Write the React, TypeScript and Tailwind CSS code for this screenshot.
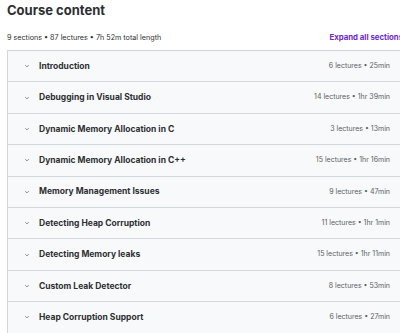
import React from 'react';

const sections = [
  { title: 'Introduction', meta: '6 lectures • 25min' },
  { title: 'Debugging in Visual Studio', meta: '14 lectures • 1hr 39min' },
  { title: 'Dynamic Memory Allocation in C', meta: '3 lectures • 13min' },
  { title: 'Dynamic Memory Allocation in C++', meta: '15 lectures • 1hr 16min' },
  { title: 'Memory Management Issues', meta: '9 lectures • 47min' },
  { title: 'Detecting Heap Corruption', meta: '11 lectures • 1hr 1min' },
  { title: 'Detecting Memory leaks', meta: '15 lectures • 1hr 11min' },
  { title: 'Custom Leak Detector', meta: '8 lectures • 53min' },
  { title: 'Heap Corruption Support', meta: '6 lectures • 27min' },
];

const Chevron = () => (
  <svg width="6" height="6" viewBox="0 0 10 10" className="text-[#6a6f73]">
    <path d="M2 3.5 L5 6.5 L8 3.5" fill="none" stroke="currentColor" strokeWidth="1.3" />
  </svg>
);

export default function App() {
  return (
    <div className="w-[400px] h-[333px] overflow-hidden bg-white font-['Inter',sans-serif] text-[#2d2f31]">
      <div className="w-[396px] ml-[7px]">
        <h2 className="text-[13px] font-bold leading-[13px] pt-[4px]">Course content</h2>
        <div className="flex items-center justify-between mt-[16px] h-[10px]">
          <span className="text-[7.2px] text-[#2d2f31]">9 sections • 87 lectures • 7h 52m total length</span>
          <span className="text-[7.8px] font-bold text-[#6d28d2] whitespace-nowrap">Expand all sections</span>
        </div>
        <div className="mt-[7px] border-t border-l border-[#d1d7dc]">
          {sections.map((s) => (
            <div
              key={s.title}
              className="flex items-center h-[31.4px] bg-[#f7f9fa] border-b border-[#d1d7dc] pl-[16px] pr-[13px]"
            >
              <Chevron />
              <span className="ml-[9px] text-[8.5px] font-bold flex-1">{s.title}</span>
              <span className="text-[7px] text-[#5a5e62]">{s.meta}</span>
            </div>
          ))}
        </div>
      </div>
    </div>
  );
}
